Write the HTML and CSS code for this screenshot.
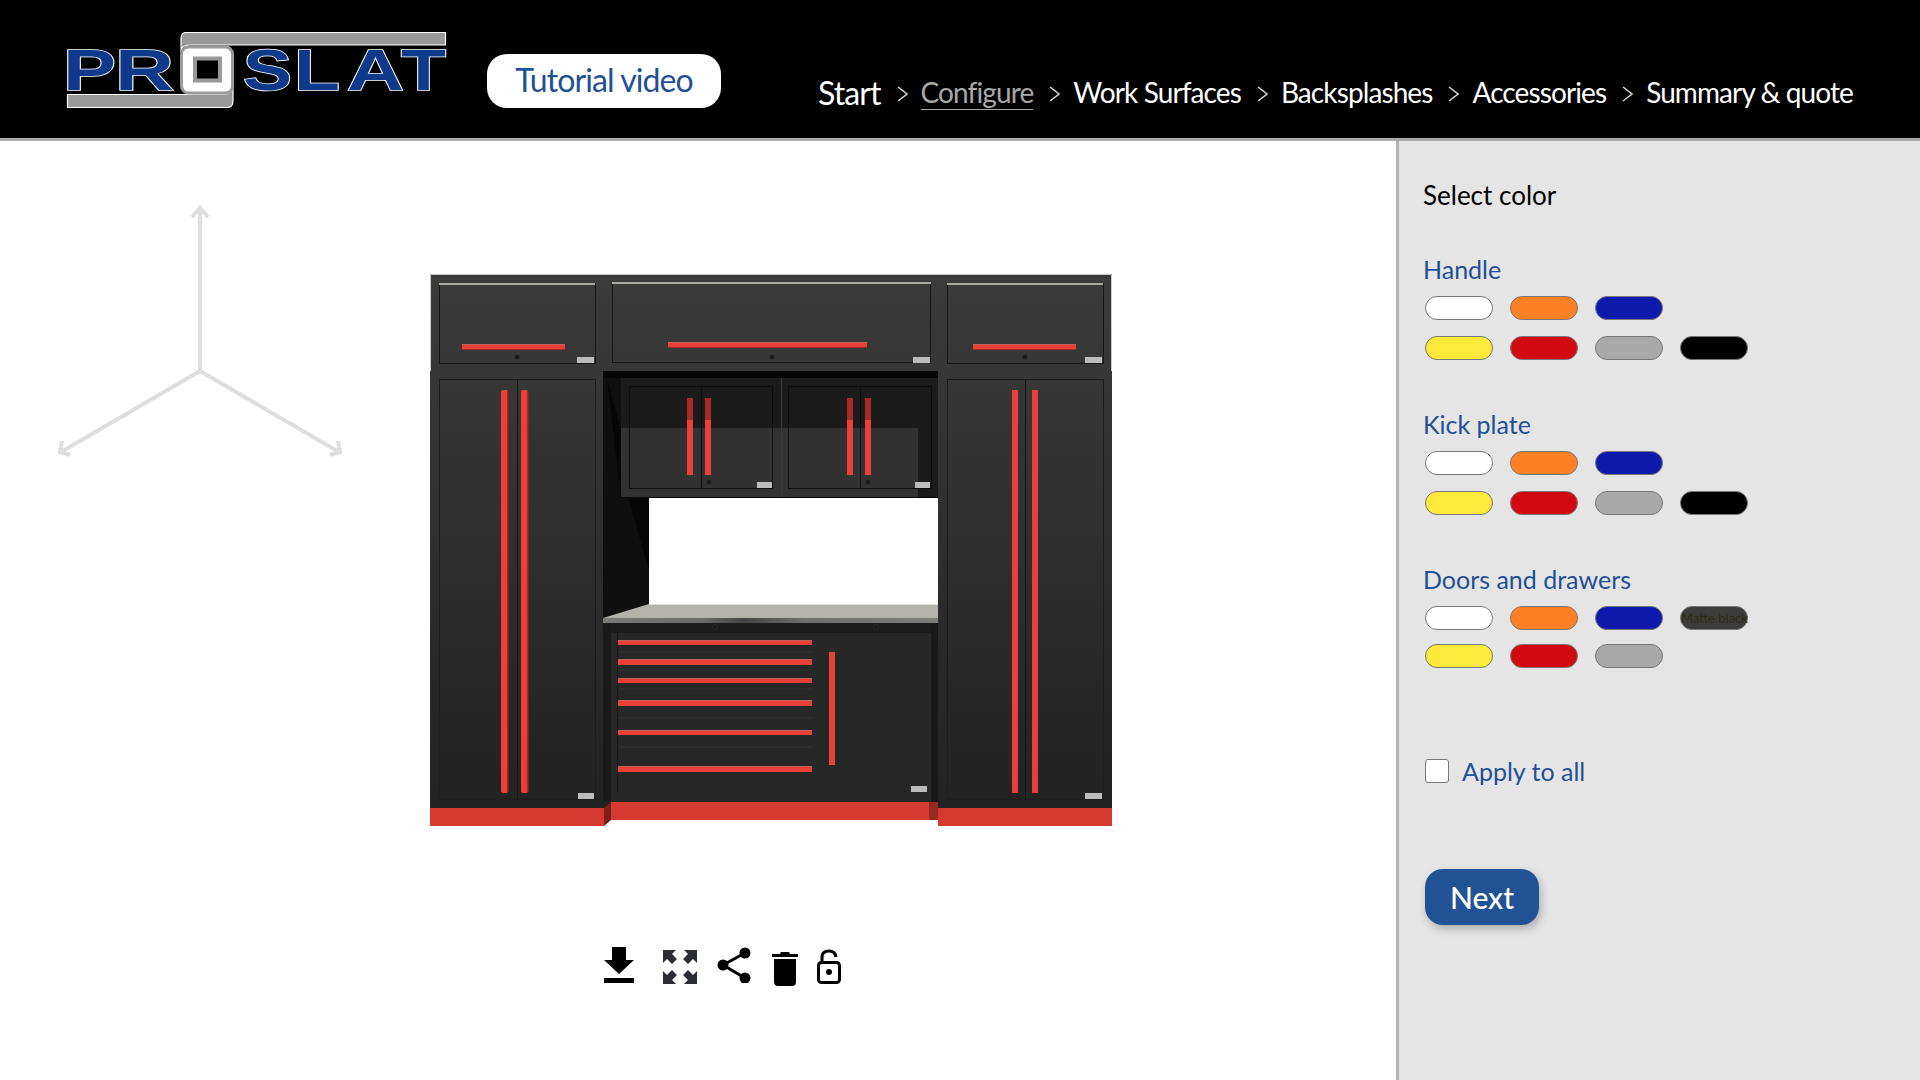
FILE: index.html
```html
<!DOCTYPE html>
<html lang="en">
<head>
    <meta charset="UTF-8">
    <meta name="viewport" content="width=device-width, initial-scale=1.0">
    <title>Proslat configurator</title>
    <link rel="stylesheet" href="styles.css">
</head>
<body>
    <header class="topbar">
        <svg class="logo" viewBox="60 32 387 77" width="387" height="77" role="img" aria-label="Proslat">
            <path class="logo-bar" d="M186 32.5H445.5V45H190Q181 45 181 52V39Q181 32.5 186 32.5Z"/>
            <path class="logo-bar" d="M67.5 94.5H225Q233 92 233 86V101Q233 107.5 227 107.5H67.5Z"/>
            <rect class="logo-o" x="181.5" y="47" width="51" height="46" rx="7"/>
            <rect class="logo-o-hole" x="195" y="58.5" width="25" height="22"/>
            <text class="logo-letter" x="63" y="90" textLength="53" lengthAdjust="spacingAndGlyphs">P</text>
            <text class="logo-letter" x="115" y="90" textLength="59" lengthAdjust="spacingAndGlyphs">R</text>
            <text class="logo-letter" x="243" y="90" textLength="49" lengthAdjust="spacingAndGlyphs">S</text>
            <text class="logo-letter" x="294" y="90" textLength="46" lengthAdjust="spacingAndGlyphs">L</text>
            <text class="logo-letter" x="347" y="90" textLength="57" lengthAdjust="spacingAndGlyphs">A</text>
            <text class="logo-letter" x="401" y="90" textLength="45" lengthAdjust="spacingAndGlyphs">T</text>
        </svg>
        <button class="tutorial">Tutorial video</button>
        <nav class="steps">
            <a class="step step-first">Start</a>
            <svg class="chev" viewBox="0 0 11 16" width="11" height="16"><path d="M1 1l9 7-9 7"/></svg>
            <a class="step step-active">Configure</a>
            <svg class="chev" viewBox="0 0 11 16" width="11" height="16"><path d="M1 1l9 7-9 7"/></svg>
            <a class="step">Work Surfaces</a>
            <svg class="chev" viewBox="0 0 11 16" width="11" height="16"><path d="M1 1l9 7-9 7"/></svg>
            <a class="step">Backsplashes</a>
            <svg class="chev" viewBox="0 0 11 16" width="11" height="16"><path d="M1 1l9 7-9 7"/></svg>
            <a class="step">Accessories</a>
            <svg class="chev" viewBox="0 0 11 16" width="11" height="16"><path d="M1 1l9 7-9 7"/></svg>
            <a class="step">Summary &amp; quote</a>
        </nav>
    </header>

    <main class="layout">
        <section class="viewer">
            <!-- scene uses page coordinates, so the viewBox starts at the header's bottom edge -->
            <svg class="scene" viewBox="0 141 1396 800" width="1396" height="800">
                <defs>
                    <linearGradient id="bodyGrad" gradientUnits="userSpaceOnUse" x1="0" y1="274" x2="0" y2="808">
                        <stop offset="0" stop-color="#3b3b3b"/>
                        <stop offset="1" stop-color="#222222"/>
                    </linearGradient>
                    <linearGradient id="edgeGrad" gradientUnits="userSpaceOnUse" x1="603" y1="0" x2="938" y2="0">
                        <stop offset="0" stop-color="#7b7b78"/>
                        <stop offset="0.3" stop-color="#6a6a68"/>
                        <stop offset="0.42" stop-color="#454545"/>
                        <stop offset="0.6" stop-color="#6f6f6d"/>
                        <stop offset="1" stop-color="#7d7d7a"/>
                    </linearGradient>
                </defs>

                <!-- axis -->
                <g class="axis">
                    <path d="M200 371V208M192 217l8-9 8 9"/>
                    <path d="M200 371L61 452M62 441l-2 11 10 3"/>
                    <path d="M200 371L339 452M338 441l2 11-10 3"/>
                </g>

                <!-- cabinet shell -->
                <rect x="430" y="274" width="682" height="534" fill="url(#bodyGrad)"/>
                <path class="edge" d="M430.5 371V274.5H1111.5V371"/>

                <!-- top row -->
                <rect class="panel" x="439.5" y="283.5" width="156" height="80" fill="url(#bodyGrad)"/>
                <rect class="panel" x="612.5" y="282.5" width="318" height="80" fill="url(#bodyGrad)"/>
                <rect class="panel" x="947.5" y="283.5" width="156" height="80" fill="url(#bodyGrad)"/>
                <rect class="steel" x="439" y="283" width="156" height="2"/>
                <rect class="steel" x="612" y="282" width="319" height="2"/>
                <rect class="steel" x="947" y="283" width="156" height="2"/>
                <rect class="red" x="462" y="344" width="103" height="6"/>
                <rect class="red-top" x="462" y="344" width="103" height="1"/>
                <rect class="red-low" x="462" y="349" width="103" height="1"/>
                <rect class="red" x="668" y="342" width="199" height="6"/>
                <rect class="red-top" x="668" y="342" width="199" height="1"/>
                <rect class="red-low" x="668" y="347" width="199" height="1"/>
                <rect class="red" x="973" y="344" width="103" height="6"/>
                <rect class="red-top" x="973" y="344" width="103" height="1"/>
                <rect class="red-low" x="973" y="349" width="103" height="1"/>
                <circle class="knob" cx="517" cy="357" r="2.5"/>
                <circle class="knob" cx="772" cy="357" r="2.5"/>
                <circle class="knob" cx="1025" cy="357" r="2.5"/>
                <rect class="badge" x="577" y="357" width="17" height="6"/>
                <rect class="badge" x="913" y="357" width="17" height="6"/>
                <rect class="badge" x="1085" y="357" width="17" height="6"/>

                <!-- tall doors -->
                <rect class="panel panel-soft" x="439.5" y="379.5" width="156" height="420" fill="url(#bodyGrad)"/>
                <rect class="panel panel-soft" x="947.5" y="379.5" width="156" height="420" fill="url(#bodyGrad)"/>
                <path class="seam" d="M517.5 379V799M1025.5 379V799"/>
                <rect class="red" x="501" y="390" width="7" height="403" rx="2"/>
                <rect class="red-low" x="507" y="391" width="1.5" height="401"/>
                <rect class="red" x="521" y="390" width="7" height="403" rx="2"/>
                <rect class="red-low" x="527" y="391" width="1.5" height="401"/>
                <rect class="red" x="1012" y="390" width="6" height="403"/>
                <rect class="red" x="1032" y="390" width="6" height="403"/>
                <rect class="badge" x="578" y="793" width="16" height="6"/>
                <rect class="badge" x="1085" y="793" width="17" height="6"/>

                <!-- recess -->
                <rect class="recess" x="603" y="371" width="335" height="127"/>
                <rect class="recess-side" x="603" y="378" width="46" height="240"/>
                <polygon class="recess" points="607,378 621,430 628,498 649,570 649,498 621,498"/>

                <!-- wall cabinet -->
                <rect class="wall-dark" x="621" y="378" width="317" height="119"/>
                <rect class="wall-light" x="621" y="428" width="297" height="69"/>
                <rect class="wall-frame" x="629.5" y="386.5" width="143" height="102"/>
                <rect class="wall-frame" x="788.5" y="386.5" width="143" height="102"/>
                <path class="wall-frame" d="M701.5 386V488M860.5 386V488"/>
                <path class="wall-mid" d="M781.5 378V497"/>
                <rect class="red" x="687" y="420" width="6" height="55"/>
                <rect class="red-shade" x="687" y="398" width="6" height="22"/>
                <rect class="red" x="705" y="420" width="6" height="55"/>
                <rect class="red-shade" x="705" y="398" width="6" height="22"/>
                <rect class="red" x="847" y="420" width="6" height="55"/>
                <rect class="red-shade" x="847" y="398" width="6" height="22"/>
                <rect class="red" x="865" y="420" width="6" height="55"/>
                <rect class="red-shade" x="865" y="398" width="6" height="22"/>
                <circle class="knob" cx="709" cy="482" r="2.5"/>
                <circle class="knob" cx="868" cy="482" r="2.5"/>
                <rect class="badge" x="757" y="482" width="15" height="6"/>
                <rect class="badge" x="915" y="482" width="15" height="6"/>

                <!-- backsplash and worktop -->
                <rect class="white" x="649" y="498" width="289" height="106"/>
                <polygon class="worktop" points="649,604 938,604 938,618 603,618"/>
                <rect class="worktop-line" x="649" y="604" width="289" height="1"/>
                <rect x="603" y="618" width="335" height="5" fill="url(#edgeGrad)"/>

                <!-- base cabinet -->
                <rect class="base" x="603" y="623" width="335" height="179"/>
                <rect class="base-strip" x="603" y="623" width="335" height="10"/>
                <rect class="base-side" x="603" y="623" width="8" height="179"/>
                <rect class="base-side" x="931" y="623" width="7" height="179"/>
                <circle class="knob" cx="715" cy="627" r="2.5"/>
                <circle class="knob" cx="876" cy="627" r="2.5"/>
                <path class="seam" d="M617.5 632V792"/>
                <path class="drawer-line" d="M619 652H813M619 670H813M619 689H813M619 718H813M619 747H813"/>
                <rect class="red" x="618" y="640" width="194" height="5"/>
                <rect class="red" x="618" y="659" width="194" height="6"/>
                <rect class="red" x="618" y="678" width="194" height="5"/>
                <rect class="red" x="618" y="700" width="194" height="6"/>
                <rect class="red" x="618" y="730" width="194" height="5"/>
                <rect class="red" x="618" y="766" width="194" height="6"/>
                <path class="red-top" d="M618 640h194v1H618ZM618 659h194v1H618ZM618 678h194v1H618ZM618 700h194v1H618ZM618 730h194v1H618ZM618 766h194v1H618Z"/>
                <rect class="red" x="829" y="652" width="6" height="113"/>
                <rect class="badge" x="911" y="786" width="16" height="6"/>

                <!-- plinths -->
                <rect class="plinth" x="430" y="808" width="174" height="18"/>
                <rect class="plinth" x="611" y="802" width="327" height="18"/>
                <rect class="plinth" x="938" y="808" width="174" height="18"/>
                <polygon class="plinth-side" points="604,808 611,802 611,820 604,826"/>
                <rect class="plinth-side-light" x="929" y="802" width="9" height="18"/>
            </svg>

            <div class="tools">
                <svg class="tool tool-download" viewBox="0 0 30 36" width="30" height="36"><path d="M8 0H22V13H30L15 27 0 13H8ZM0 31H30V36H0Z"/></svg>
                <svg class="tool tool-expand" viewBox="0 0 36 36" width="36" height="36"><path d="M1 1H14L10 5 15 10 10 15 5 10 1 14ZM35 1V14L31 10 26 15 21 10 26 5 22 1ZM1 35V22L5 26 10 21 15 26 10 31 14 35ZM35 35H22L26 31 21 26 26 21 31 26 35 22Z"/></svg>
                <svg class="tool" viewBox="0 0 34 36" width="34" height="36"><circle cx="28" cy="6" r="5.5"/><circle cx="6" cy="18" r="5.5"/><circle cx="28" cy="31" r="5.5"/><path class="tool-line" d="M28 6L6 18 28 31"/></svg>
                <svg class="tool tool-trash" viewBox="0 0 26 36" width="26" height="36"><path d="M9 2H17L18 4H26V7H0V4H8ZM2 9H24V32Q24 36 20 36H6Q2 36 2 32Z"/></svg>
                <svg class="tool tool-lock" viewBox="0 0 24 36" width="24" height="36"><path class="tool-line" d="M5 13V8Q5 2 12 2 18 2 19 8"/><rect class="tool-line" x="1.5" y="13.5" width="21" height="20" rx="3"/><circle cx="12" cy="23" r="3"/></svg>
            </div>
        </section>

        <aside class="sidebar">
            <h2 class="sidebar-title">Select color</h2>

            <h3 class="group-title group-first">Handle</h3>
            <div class="swatches">
                <span class="swatch c-white"></span>
                <span class="swatch c-orange"></span>
                <span class="swatch c-blue"></span>
                <span class="swatch c-yellow new-row"></span>
                <span class="swatch c-red"></span>
                <span class="swatch c-grey"></span>
                <span class="swatch c-black"></span>
            </div>

            <h3 class="group-title">Kick plate</h3>
            <div class="swatches">
                <span class="swatch c-white"></span>
                <span class="swatch c-orange"></span>
                <span class="swatch c-blue"></span>
                <span class="swatch c-yellow new-row"></span>
                <span class="swatch c-red"></span>
                <span class="swatch c-grey"></span>
                <span class="swatch c-black"></span>
            </div>

            <h3 class="group-title">Doors and drawers</h3>
            <div class="swatches swatches-tight">
                <span class="swatch c-white"></span>
                <span class="swatch c-orange"></span>
                <span class="swatch c-blue"></span>
                <span class="swatch c-matte">Matte black</span>
                <span class="swatch c-yellow"></span>
                <span class="swatch c-red"></span>
                <span class="swatch c-grey"></span>
            </div>

            <label class="apply">
                <span class="apply-box"></span>
                <span>Apply to all</span>
            </label>

            <button class="next">Next</button>
        </aside>
    </main>
</body>
</html>
```

FILE: styles.css
```css
* {
    margin: 0;
    padding: 0;
    box-sizing: border-box;
}
body {
    width: 1920px;
    height: 1080px;
    overflow: hidden;
    background: white;
    font-family: Lato, "Open Sans", sans-serif;
}

/* header */
.topbar {
    height: 141px;
    display: flex;
    align-items: flex-start;
    background: black;
    border-bottom: 3px solid #a9a9a9;
}
.logo {
    display: block;
    margin: 32px 0 0 60px;
    flex: none;
}
.logo-bar {
    fill: #999;
    stroke: #fff;
    stroke-width: 1.2;
}
.logo-o {
    fill: #fff;
    stroke: #9a9a9a;
    stroke-width: 3;
}
.logo-o-hole {
    fill: #000;
    stroke: #999;
    stroke-width: 4;
}
.logo-letter {
    font-family: "Liberation Sans", sans-serif;
    font-weight: 700;
    font-size: 57px;
    fill: #0f3a8c;
    stroke: #fff;
    stroke-width: 1.6;
    paint-order: stroke;
}
.tutorial {
    width: 234px;
    height: 54px;
    margin: 54px 0 0 40px;
    padding-bottom: 3px;
    background: white;
    border: none;
    border-radius: 20px;
    color: #1f5096;
    font-family: inherit;
    font-size: 32px;
    letter-spacing: -0.9px;
}
.steps {
    display: flex;
    align-items: center;
    margin: 73px 67px 0 auto;
    height: 38px;
}
.step {
    color: white;
    font-size: 28px;
    letter-spacing: -0.9px;
    white-space: nowrap;
}
.step-first {
    font-size: 32px;
}
.step-active {
    color: #a8a8a8;
    border-bottom: 1px solid #a8a8a8;
}
.chev {
    margin: 4px 13px 0 16px;
    flex: none;
}
.chev path {
    fill: none;
    stroke: #d8d8d8;
    stroke-width: 1.5;
}

/* main area */
.layout {
    display: flex;
    height: 939px;
}
.viewer {
    width: 1396px;
    flex: none;
}
.scene {
    display: block;
}
.axis path {
    fill: none;
    stroke: #dedede;
    stroke-width: 4;
}
.edge {
    fill: none;
    stroke: #c9c9c9;
}
.panel {
    stroke: #161616;
    stroke-width: 1;
}
.panel-soft {
    stroke: #1d1d1d;
}
.steel { fill: #a9a9a2; }
.red { fill: #e9413a; }
.red-top { fill: #c0655e; }
.red-low { fill: #a3271f; }
.red-shade { fill: #a92a23; }
.knob { fill: #1b1b1b; stroke: #333; stroke-width: 0.5; }
.badge { fill: #bcbcbc; }
.seam { fill: none; stroke: #161616; stroke-width: 1; }
.recess { fill: #060606; }
.recess-side { fill: #0f0f0f; }
.wall-dark { fill: #1b1b1b; }
.wall-light { fill: #323232; }
.wall-frame { fill: none; stroke: #0e0e0e; stroke-width: 1; }
.wall-mid { stroke: #3a3a3a; stroke-width: 1; }
.white { fill: #fff; }
.worktop { fill: #b3b2ab; }
.worktop-line { fill: #dcdcd8; }
.base { fill: #272727; }
.base-strip { fill: #1c1c1c; }
.base-side { fill: #191919; }
.drawer-line { fill: none; stroke: #333; stroke-width: 1; }
.plinth { fill: #d43a30; }
.plinth-side { fill: #7e1f17; }
.plinth-side-light { fill: #962a20; }

/* toolbar under the model */
.tools {
    display: flex;
    align-items: flex-start;
    gap: 19px;
    margin: 6px 0 0 604px;
}
.tool {
    display: block;
    flex: none;
    fill: black;
}
.tool-download { margin-right: 9px; }
.tool-expand { fill: #2b2d33; margin-top: 2px; }
.tool-trash { margin-left: 2px; margin-top: 3px; }
.tool-lock { margin-top: 2px; }
.tool-line {
    fill: none;
    stroke: black;
    stroke-width: 3;
}

/* colour sidebar */
.sidebar {
    flex: 1;
    background: #e5e5e5;
    border-left: 3px solid #b2b2b2;
    padding: 39px 0 0 24px;
}
.sidebar-title,
.group-title {
    font-size: 25px;
    font-weight: 400;
    line-height: 30px;
}
.sidebar-title {
    color: black;
    font-size: 26px;
}
.group-title {
    color: #1f5096;
    margin-top: 49px;
}
.group-first {
    margin-top: 44px;
}
.swatches {
    display: grid;
    grid-template-columns: repeat(4, 68px);
    grid-auto-rows: 24px;
    gap: 16px 17px;
    margin: 12px 0 0 2px;
}
.swatches-tight {
    row-gap: 14px;
}
.new-row {
    grid-column: 1;
}
.swatch {
    display: block;
    border: 1px solid #777;
    border-radius: 12px;
}
.c-white { background: #fff; }
.c-orange { background: #ff7f24; }
.c-blue { background: #0f1aad; }
.c-yellow { background: #ffe93a; }
.c-red { background: #d00a10; }
.c-grey { background: #a9a9a9; }
.c-black { background: #000; }
.c-matte {
    background: #3c3c3c;
    color: #2c2c10;
    font-size: 13px;
    line-height: 22px;
    text-align: center;
    white-space: nowrap;
}
.apply {
    display: flex;
    align-items: center;
    gap: 13px;
    margin: 91px 0 0 2px;
    height: 24px;
    color: #1f5096;
    font-size: 25px;
}
.apply-box {
    width: 24px;
    height: 24px;
    background: white;
    border: 1px solid #777;
    border-radius: 3px;
}
.next {
    display: block;
    width: 114px;
    height: 56px;
    margin: 86px 0 0 2px;
    background: #205295;
    border: none;
    border-radius: 18px;
    box-shadow: 2px 4px 8px rgba(0, 0, 0, 0.25);
    color: white;
    font-family: inherit;
    font-size: 30px;
    font-weight: 500;
}
```
